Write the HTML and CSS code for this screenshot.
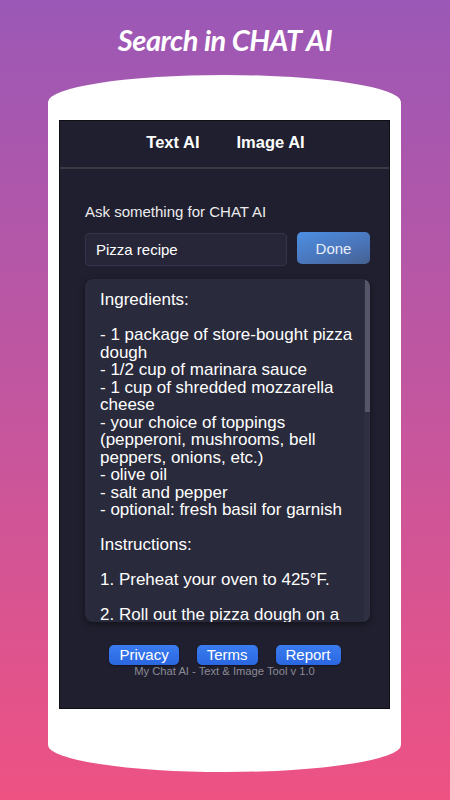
FILE: index.html
```html
<!DOCTYPE html>
<html>
<head>
<meta charset="utf-8">
<link rel="stylesheet" href="styles.css">
</head>
<body>
<div class="page">
  <h1 class="title">Search in CHAT AI</h1>
  <div class="phone">
    <div class="screen">
      <nav class="tabs">
        <span class="tab">Text AI</span>
        <span class="tab">Image AI</span>
      </nav>
      <main class="content">
        <label class="ask">Ask something for CHAT AI</label>
        <div class="query-row">
          <div class="input">Pizza recipe</div>
          <button class="done">Done</button>
        </div>
        <div class="answer">
          <div class="answer-text">Ingredients:

- 1 package of store-bought pizza dough
- 1/2 cup of marinara sauce
- 1 cup of shredded mozzarella cheese
- your choice of toppings (pepperoni, mushrooms, bell peppers, onions, etc.)
- olive oil
- salt and pepper
- optional: fresh basil for garnish

Instructions:

1. Preheat your oven to 425°F.

2. Roll out the pizza dough on a</div>
          <div class="scrollbar"><div class="thumb"></div></div>
        </div>
      </main>
      <footer class="footer">
        <div class="links">
          <button class="link">Privacy</button>
          <button class="link">Terms</button>
          <button class="link">Report</button>
        </div>
        <div class="version">My Chat AI - Text &amp; Image Tool v 1.0</div>
      </footer>
    </div>
  </div>
</div>
</body>
</html>
```
FILE: styles.css
```css
* { box-sizing: border-box; }
html, body { margin: 0; padding: 0; }
body {
  width: 450px;
  height: 800px;
  overflow: hidden;
  background: linear-gradient(180deg, #9b58b6 0%, #c3569f 50%, #ee5283 100%);
  font-family: "Liberation Sans", Arial, sans-serif;
}
.page {
  display: flex;
  flex-direction: column;
  align-items: flex-start;
}
.title {
  align-self: center;
  margin: 22px 0 0 0;
  height: 53px;
  font-family: Lato, "Open Sans", sans-serif;
  font-style: italic;
  font-weight: 700;
  font-size: 29px;
  line-height: 36px;
  color: #ffffff;
  letter-spacing: -0.45px;
}
.phone {
  width: 353px;
  height: 697px;
  margin-left: 48px;
  background: #ffffff;
  border-radius: 176px 176px 176px 176px / 27px 27px 27px 27px;
  padding: 45px 11px 0 11px;
}
.screen {
  width: 331px;
  height: 589px;
  background: #201f2f;
  border: 1px solid #0e0e14;
  display: flex;
  flex-direction: column;
}
.tabs {
  height: 48px;
  flex: none;
  border-bottom: 2px solid #3a3a42;
  display: flex;
  justify-content: center;
  align-items: center;
  gap: 37px;
  padding: 0 0 3px 2px;
}
.tab {
  color: #ffffff;
  font-weight: 700;
  font-size: 16.5px;
}
.content {
  padding: 34px 19px 0 25px;
  display: flex;
  flex-direction: column;
}
.ask {
  color: #ececec;
  font-size: 15px;
  line-height: 17px;
}
.query-row {
  display: flex;
  gap: 10px;
  margin-top: 12px;
  align-items: flex-start;
}
.input {
  width: 202px;
  height: 33px;
  background: #262638;
  border: 1px solid #34344a;
  border-radius: 4px;
  color: #ffffff;
  font-size: 15px;
  line-height: 17px;
  padding: 7px 10px;
  margin-top: 1px;
}
.done {
  width: 73px;
  height: 32px;
  border: none;
  border-radius: 5px;
  background: linear-gradient(160deg, #4c8fe2 0%, #4a74b8 60%, #44618f 100%);
  color: #e8eef8;
  font-family: "Liberation Sans", Arial, sans-serif;
  font-size: 15px;
  padding: 0;
}
.answer {
  position: relative;
  margin-top: 13px;
  width: 285px;
  height: 343px;
  background: #292a3b;
  border-radius: 8px;
  box-shadow: 0 2px 6px rgba(0, 0, 0, 0.45);
  overflow: hidden;
}
.answer-text {
  padding: 12px 8px 0 15px;
  white-space: pre-wrap;
  color: #ffffff;
  font-size: 17px;
  line-height: 17.5px;
}
.scrollbar {
  position: absolute;
  top: 0;
  right: 0;
  width: 6px;
  height: 100%;
  background: #2f3042;
}
.thumb {
  margin-left: 1px;
  width: 5px;
  height: 133px;
  background: #55566a;
}
.footer {
  margin-top: 23px;
  display: flex;
  flex-direction: column;
  align-items: center;
}
.links {
  display: flex;
  gap: 18px;
  padding-left: 1px;
}
.link {
  height: 20px;
  border: none;
  border-radius: 5px;
  background: linear-gradient(180deg, #3a7df0 0%, #2a66e0 100%);
  color: #ffffff;
  font-family: "Liberation Sans", Arial, sans-serif;
  font-size: 15px;
  line-height: 20px;
  padding: 0 10px;
  box-shadow: 0 1px 2px rgba(0, 0, 0, 0.4);
}
.version {
  margin-top: 0;
  color: #8a8a94;
  font-size: 11.2px;
  line-height: 13px;
}
```
